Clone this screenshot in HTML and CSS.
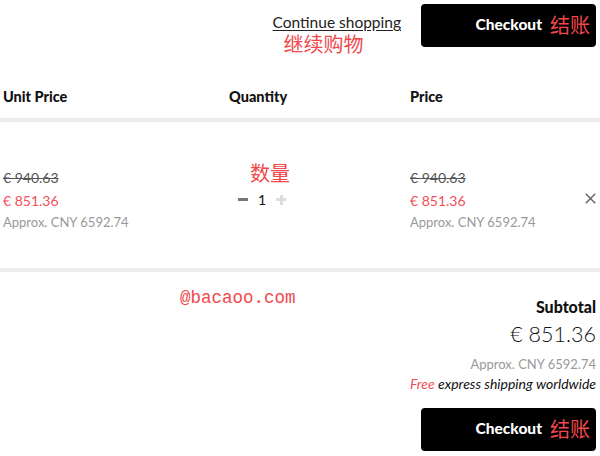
FILE: index.html
```html
<!DOCTYPE html>
<html>
<head>
<meta charset="utf-8">
<link rel="stylesheet" href="styles.css">
</head>
<body>
<div class="page">
  <div class="topbar">
    <div class="continue">
      <a class="link" href="#">Continue shopping</a>
      <span class="note note-continue">继续购物</span>
    </div>
    <button class="checkout">Checkout <span class="note-btn">结账</span></button>
  </div>

  <div class="grid head">
    <div>Unit Price</div>
    <div>Quantity</div>
    <div>Price</div>
  </div>

  <div class="grid item">
    <div class="prices">
      <div class="old">€ 940.63</div>
      <div class="new">€ 851.36</div>
      <div class="approx">Approx. CNY 6592.74</div>
    </div>
    <div class="qtycell">
      <span class="note note-qty">数量</span>
      <div class="qty">
        <span class="minus"></span>
        <span class="num">1</span>
        <span class="plus"></span>
      </div>
    </div>
    <div class="prices">
      <div class="old">€ 940.63</div>
      <div class="new">€ 851.36</div>
      <div class="approx">Approx. CNY 6592.74</div>
    </div>
    <div class="remove">
      <svg width="11" height="11" viewBox="0 0 11 11"><path d="M0.8 0.8L10.2 10.2M10.2 0.8L0.8 10.2" stroke="#666" stroke-width="1.5" fill="none"/></svg>
    </div>
  </div>

  <div class="summary">
    <div class="watermark">@bacaoo.com</div>
    <div class="totals">
      <div class="sub-label">Subtotal</div>
      <div class="sub-value">€ 851.36</div>
      <div class="sub-approx">Approx. CNY 6592.74</div>
      <div class="shipping"><span class="free">Free</span> express shipping worldwide</div>
      <button class="checkout">Checkout <span class="note-btn">结账</span></button>
    </div>
  </div>
</div>
</body>
</html>
```
FILE: styles.css
```css
html, body {
  margin: 0;
  padding: 0;
  background: #fff;
}
body {
  font-family: Lato, "Noto Sans", sans-serif;
  color: #111;
  width: 600px;
  height: 456px;
  overflow: hidden;
}
.page {
  width: 600px;
}
.topbar {
  display: flex;
  justify-content: flex-end;
  align-items: flex-start;
  padding: 4px 4px 0 0;
  gap: 20px;
  height: 71px;
}
.continue {
  position: relative;
  padding-top: 8px;
}
.link {
  font-size: 15.5px;
  color: #222;
  text-decoration: underline;
  text-underline-offset: 2px;
}
.note, .note-btn, .watermark {
  color: #f0484c;
  font-family: "Noto Sans CJK SC", sans-serif;
}
.note-continue {
  position: absolute;
  left: 11px;
  top: 25px;
  font-size: 20px;
  white-space: nowrap;
}
.checkout {
  width: 175px;
  height: 43px;
  background: #000;
  color: #fff;
  border: none;
  border-radius: 4px;
  font-family: Lato, sans-serif;
  font-weight: 900;
  font-size: 15.5px;
  display: flex;
  align-items: center;
  justify-content: flex-end;
  padding: 0 6px 3px 0;
  gap: 8px;
}
.note-btn {
  font-size: 20px;
  font-weight: 400;
}
.grid {
  display: grid;
  grid-template-columns: 226px 181px 1fr 15px;
  padding-left: 3px;
  padding-right: 4px;
}
.head {
  height: 47px;
  align-items: center;
  font-weight: 900;
  font-size: 14.5px;
  border-bottom: 4px solid #ededed;
  box-sizing: border-box;
}
.item {
  height: 150px;
  align-items: center;
  border-bottom: 4px solid #ededed;
  box-sizing: border-box;
  padding-top: 7px;
}
.prices {
  font-size: 14px;
  line-height: 23px;
}
.old {
  color: #555;
  text-decoration: line-through;
}
.new {
  color: #f0505a;
}
.approx {
  color: #999;
  font-size: 13px;
  line-height: 20px;
}
.qtycell {
  display: flex;
  flex-direction: column;
  align-items: flex-start;
  padding-bottom: 28px;
}
.note-qty {
  font-size: 20px;
  margin-left: 21px;
  line-height: 24px;
  margin-bottom: 6px;
}
.qty {
  display: flex;
  align-items: center;
  gap: 10px;
  padding-left: 9px;
}
.minus {
  width: 10px;
  height: 3px;
  background: #777;
}
.num {
  font-size: 14px;
  color: #111;
  width: 8px;
  text-align: center;
}
.plus {
  width: 10px;
  height: 10px;
  background:
    linear-gradient(#ddd, #ddd) center / 10px 3px no-repeat,
    linear-gradient(#ddd, #ddd) center / 3px 10px no-repeat;
}
.remove {
  display: flex;
  align-items: center;
  justify-content: flex-end;
}
.summary {
  position: relative;
  display: flex;
  justify-content: flex-end;
  padding: 24px 4px 0 0;
}
.watermark {
  position: absolute;
  left: 180px;
  top: 16px;
  font-family: "Liberation Mono", monospace;
  font-size: 17.5px;
}
.totals {
  display: flex;
  flex-direction: column;
  align-items: flex-end;
}
.sub-label {
  font-weight: 900;
  font-size: 16px;
  line-height: 22px;
}
.sub-value {
  font-size: 21.5px;
  line-height: 32px;
  font-weight: 300;
}
.sub-approx {
  color: #999;
  font-size: 13px;
  line-height: 24px;
  margin-top: 2px;
}
.shipping {
  font-style: italic;
  font-size: 14px;
  line-height: 16px;
  color: #111;
}
.free {
  color: #f0505a;
}
.totals .checkout {
  margin-top: 16px;
}
```
